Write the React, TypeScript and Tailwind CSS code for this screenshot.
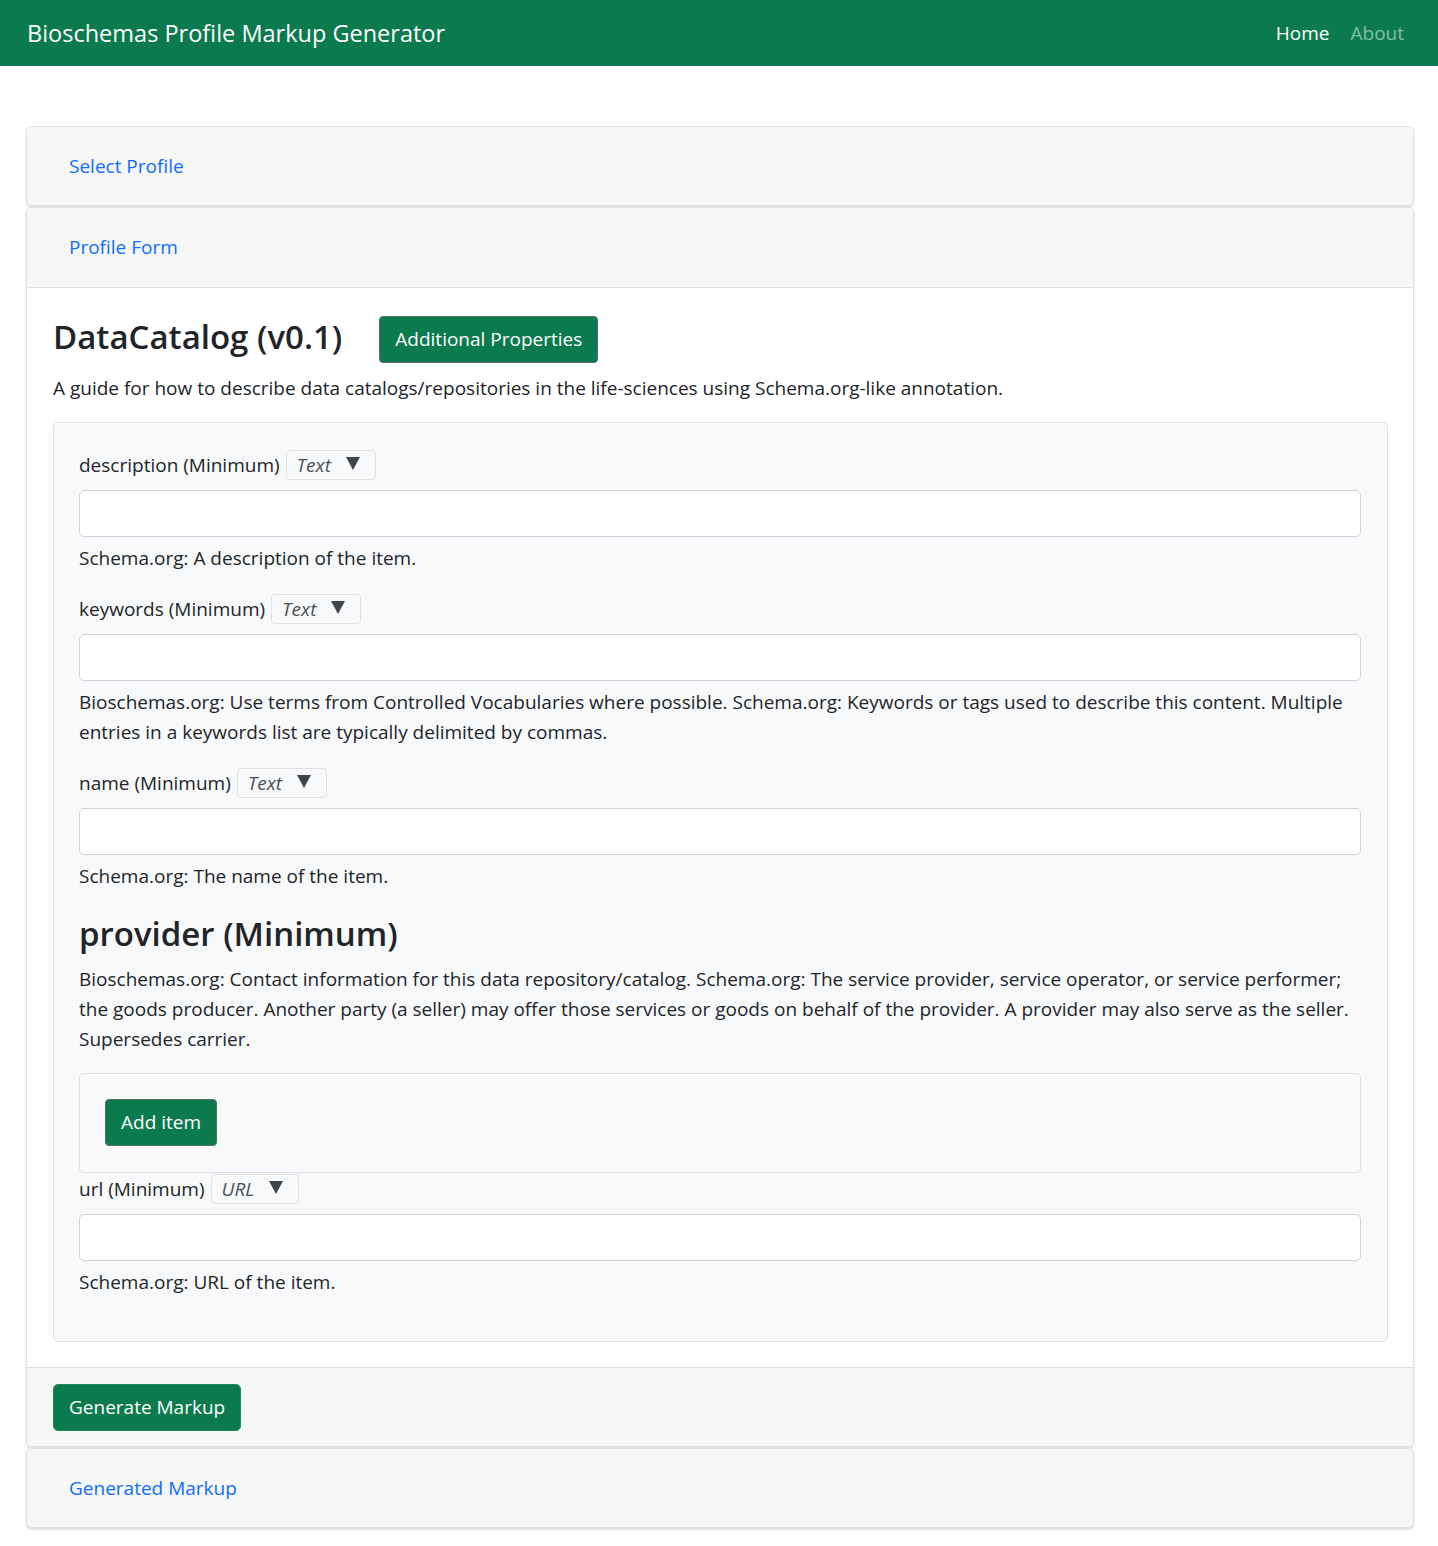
import React from "react";

const font = { fontFamily: '"Open Sans", "Noto Sans", "Liberation Sans", sans-serif' };

function TypeSelect({ label }: { label: string }) {
  return (
    <span className="inline-flex items-center h-[30px] border border-[#dee2e6] rounded-[4px] bg-[#f8f9fa] pl-[10px] pr-[15px] ml-[6px]">
      <span className="italic text-[#495057] text-[19px]">{label}</span>
      <svg width="14" height="14" viewBox="0 0 14 14" className="ml-[15px] -mt-[4px]">
        <path d="M0 1 L14 1 L7 14 Z" fill="#40454b" />
      </svg>
    </span>
  );
}

function Field({ name, type, help }: { name: string; type: string; help: React.ReactNode }) {
  return (
    <div className="mb-[21px]">
      <div className="flex items-center h-[30px] mb-[10px]">
        <span className="text-[19px] text-[#212529]">{name}</span>
        <TypeSelect label={type} />
      </div>
      <div className="h-[47px] bg-white border border-[#ced4da] rounded-[5px]" />
      <div className="mt-[6px] text-[19px] leading-[30px] text-[#212529]">{help}</div>
    </div>
  );
}

export default function App() {
  return (
    <div style={font} className="min-h-[1546px] bg-white text-[#212529]">
      <nav className="h-[66px] bg-[#0b7a4e] flex items-center justify-between pl-[27px] pr-[34px]">
        <span className="text-white text-[23.5px] mt-[1px]">Bioschemas Profile Markup Generator</span>
        <div className="flex items-center gap-[21px] text-[19px]">
          <span className="text-white">Home</span>
          <span className="text-[#85bea8]">About</span>
        </div>
      </nav>

      <div className="pl-[26px] pr-[24px] pt-[60px]">
        <div className="border border-[#dfdfdf] rounded-[5px] bg-[#f7f7f7] shadow-[0_2px_2px_rgba(0,0,0,0.12)] h-[80px] flex items-center pl-[42px]">
          <span className="text-[#0d6efd] text-[19px]">Select Profile</span>
        </div>

        <div className="mt-[1px] border border-[#dfdfdf] rounded-[5px] bg-white shadow-[0_2px_2px_rgba(0,0,0,0.12)] overflow-hidden">
          <div className="h-[80px] bg-[#f7f7f7] border-b border-[#dfdfdf] flex items-center pl-[42px]">
            <span className="text-[#0d6efd] text-[19px]">Profile Form</span>
          </div>
          <div className="pl-[26px] pr-[25px] pt-[28px] pb-[25px]">
            <div className="flex items-center">
              <h1 className="text-[33px] font-semibold leading-[40px] pb-[6px]">DataCatalog (v0.1)</h1>
              <button className="ml-[37px] h-[47px] px-[15px] bg-[#0b7a4e] border border-[#55705f] rounded-[4px] text-white text-[19px]">
                Additional Properties
              </button>
            </div>
            <p className="mt-[10px] text-[19px] leading-[30px]">
              A guide for how to describe data catalogs/repositories in the life-sciences using Schema.org-like annotation.
            </p>
            <div className="mt-[19px] bg-[#f8f9fa] border border-[#dee2e6] rounded-[5px] pl-[25px] pr-[26px] pt-[27px] pb-[44px]">
              <Field name="description (Minimum)" type="Text" help="Schema.org: A description of the item." />
              <Field
                name="keywords (Minimum)"
                type="Text"
                help="Bioschemas.org: Use terms from Controlled Vocabularies where possible. Schema.org: Keywords or tags used to describe this content. Multiple entries in a keywords list are typically delimited by commas."
              />
              <Field name="name (Minimum)" type="Text" help="Schema.org: The name of the item." />
              <h2 className="text-[33px] font-semibold leading-[44px] mt-[19px]">provider (Minimum)</h2>
              <p className="mt-[8px] text-[19px] leading-[30px]">
                Bioschemas.org: Contact information for this data repository/catalog. Schema.org: The service provider, service operator, or service performer; the goods producer. Another party (a seller) may offer those services or goods on behalf of the provider. A provider may also serve as the seller. Supersedes carrier.
              </p>
              <div className="mt-[19px] bg-[#f8f9fa] border border-[#dee2e6] rounded-[5px] p-[25px] h-[100px]">
                <button className="h-[47px] px-[15px] bg-[#0b7a4e] border border-[#55705f] rounded-[4px] text-white text-[19px]">
                  Add item
                </button>
              </div>
              <div className="flex items-center h-[30px] mt-[1px] mb-[10px]">
                <span className="text-[19px]">url (Minimum)</span>
                <TypeSelect label="URL" />
              </div>
              <div className="h-[47px] bg-white border border-[#ced4da] rounded-[5px]" />
              <div className="mt-[6px] text-[19px] leading-[30px]">Schema.org: URL of the item.</div>
            </div>
          </div>
          <div className="h-[79px] bg-[#f7f7f7] border-t border-[#dfdfdf] flex items-center pl-[26px]">
            <button className="h-[47px] px-[15px] bg-[#0b7a4e] border border-[#1c8a56] rounded-[5px] text-white text-[19px]">
              Generate Markup
            </button>
          </div>
        </div>

        <div className="mt-[1px] border border-[#dfdfdf] rounded-[5px] bg-[#f7f7f7] shadow-[0_2px_2px_rgba(0,0,0,0.12)] h-[80px] flex items-center pl-[42px]">
          <span className="text-[#0d6efd] text-[19px]">Generated Markup</span>
        </div>
      </div>
    </div>
  );
}
